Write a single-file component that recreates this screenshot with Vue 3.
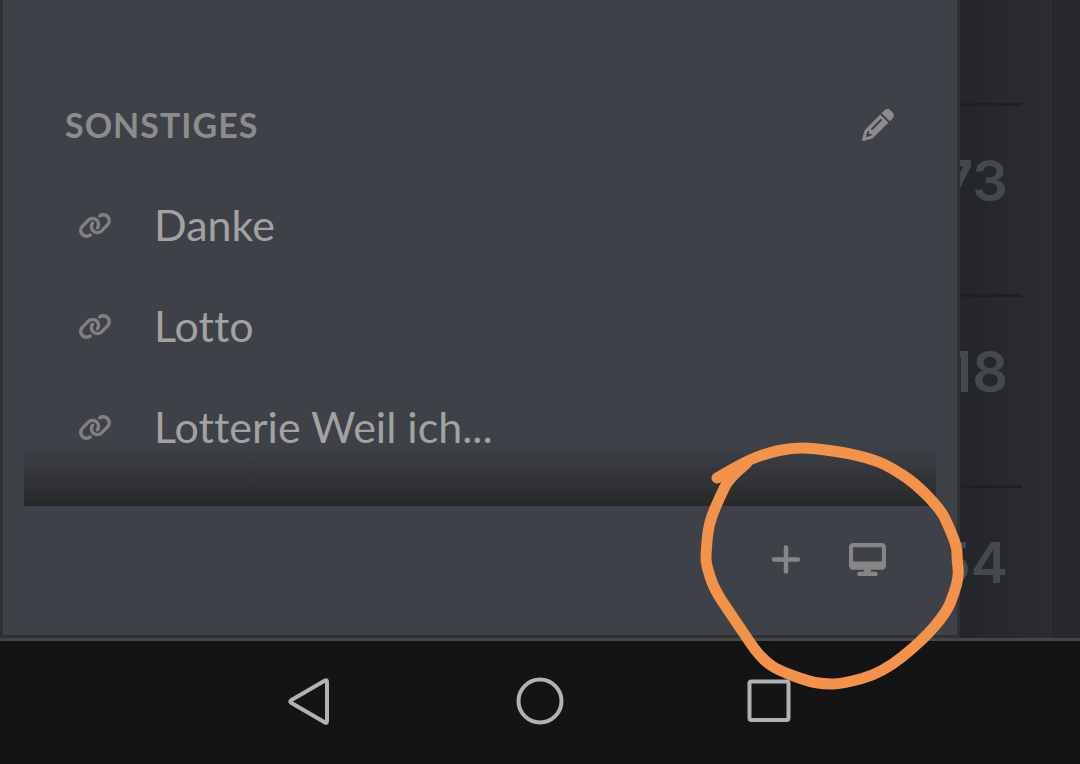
<script setup>
const links = ['Danke', 'Lotto', 'Lotterie Weil ich...']
const counts = ['', '73', '18', '54']

const markerPoints = [
  [717, 478], [742, 463], [767, 453], [791, 448], [813, 448], [853, 454], [877, 461],
  [890, 467], [915, 483], [941, 510], [949, 527], [957, 547], [957, 560], [959, 575],
  [954, 594], [946, 613], [922, 641], [882, 673], [842, 684], [823, 684], [807, 681],
  [778, 670], [766, 662], [755, 650], [745, 635], [730, 613], [714, 589], [706, 564],
  [706, 553], [708, 530], [712, 515], [720, 497], [728, 480], [747, 463],
]

const markerPath = markerPoints.reduce((path, [x, y], i, all) => {
  if (i === 0) return `M${x} ${y}`
  const next = all[i + 1]
  if (!next) return `${path}L${x} ${y}`
  return `${path}Q${x} ${y} ${(x + next[0]) / 2} ${(y + next[1]) / 2}`
}, '')
</script>

<template>
  <div class="screen">
    <div class="view">
      <main class="page">
        <ul class="topics">
          <li v-for="(count, i) in counts" :key="i" class="topic">{{ count }}</li>
        </ul>
      </main>

      <aside class="drawer">
        <div class="sections">
          <header class="section-head">
            <h2>Sonstiges</h2>
            <button type="button" aria-label="Bearbeiten">
              <svg width="32" height="32" viewBox="0 0 512 512" fill="currentColor">
                <path d="M410.3 231l11.3-11.3-33.9-33.9-62.1-62.1L291.7 89.8l-11.3 11.3-22.6 22.6L58.6 322.9c-10.4 10.4-18 23.3-22.2 37.4L1 480.7c-2.5 8.4-.2 17.5 6.1 23.7s15.3 8.5 23.7 6.1l120.3-35.4c14.1-4.2 27-11.8 37.4-22.2L387.7 253.7 410.3 231zM160 399.4l-9.1 22.7c-4 3.1-8.5 5.4-13.3 6.9L59.4 452l23-78.1c1.4-4.9 3.8-9.4 6.9-13.3l22.7-9.1v32c0 8.8 7.2 16 16 16h32zM362.7 18.7L348.3 33.2 325.7 55.8 314.3 67.1l33.9 33.9 62.1 62.1 33.9 33.9 11.3-11.3 22.6-22.6 14.5-14.5c25-25 25-65.5 0-90.5L453.3 18.7c-25-25-65.5-25-90.5 0zm-47.4 168l-144 144c-6.2 6.2-16.4 6.2-22.6 0s-6.2-16.4 0-22.6l144-144c6.2-6.2 16.4-6.2 22.6 0s6.2 16.4 0 22.6z" />
              </svg>
            </button>
          </header>
          <nav class="links">
            <a v-for="link in links" :key="link" href="#">
              <svg width="34" height="27" viewBox="0 0 640 512" fill="currentColor" aria-hidden="true">
                <path d="M579.8 267.7c56.5-56.5 56.5-148 0-204.5c-50-50-128.8-56.5-186.3-15.4l-1.6 1.1c-14.4 10.3-17.7 30.3-7.4 44.6s30.3 17.7 44.6 7.4l1.6-1.1c32.1-22.9 76-19.3 103.8 8.6c31.5 31.5 31.5 82.5 0 114L422.3 334.8c-31.5 31.5-82.5 31.5-114 0c-27.9-27.9-31.5-71.8-8.6-103.8l1.1-1.6c10.3-14.4 6.9-34.4-7.4-44.6s-34.4-6.9-44.6 7.4l-1.1 1.6C206.5 251.2 213 330 263 380c56.5 56.5 148 56.5 204.5 0L579.8 267.7zM60.2 244.3c-56.5 56.5-56.5 148 0 204.5c50 50 128.8 56.5 186.3 15.4l1.6-1.1c14.4-10.3 17.7-30.3 7.4-44.6s-30.3-17.7-44.6-7.4l-1.6 1.1c-32.1 22.9-76 19.3-103.8-8.6C74 372 74 321 105.5 289.5L217.7 177.2c31.5-31.5 82.5-31.5 114 0c27.9 27.9 31.5 71.8 8.6 103.9l-1.1 1.6c-10.3 14.4-6.9 34.4 7.4 44.6s34.4 6.9 44.6-7.4l1.1-1.6C433.5 260.8 427 182 377 132c-56.5-56.5-148-56.5-204.5 0L60.2 244.3z" />
              </svg>
              <span>{{ link }}</span>
            </a>
          </nav>
          <div class="fade"></div>
        </div>
        <footer class="tools">
          <button type="button" aria-label="Abschnitt hinzufügen">
            <svg width="30" height="30" viewBox="0 0 30 30" fill="none" stroke="currentColor" stroke-width="4.500" stroke-linecap="round">
              <path d="M15 2.500V26.500M3 14.500H27" />
            </svg>
          </button>
          <button type="button" aria-label="Desktop-Ansicht">
            <svg width="37" height="33" viewBox="0 0 576 512" fill="currentColor">
              <path d="M64 0C28.7 0 0 28.7 0 64V352c0 35.3 28.7 64 64 64H240l-10.7 32H160c-17.7 0-32 14.3-32 32s14.3 32 32 32H416c17.7 0 32-14.3 32-32s-14.3-32-32-32H346.7L336 416H512c35.3 0 64-28.7 64-64V64c0-35.3-28.7-64-64-64H64zM512 64V288H64V64H512z" />
            </svg>
          </button>
        </footer>
      </aside>
    </div>

    <nav class="system-bar">
      <button type="button" aria-label="Zurück">
        <svg width="50" height="50" viewBox="0 0 50 50">
          <path d="M40 4.500Q42 3.500 42 6V45Q42 47.500 40 46.500L6.500 27Q4 25.500 6.500 24Z" />
        </svg>
      </button>
      <button type="button" aria-label="Startseite">
        <svg width="50" height="50" viewBox="0 0 50 50"><circle cx="25" cy="25" r="21.500" /></svg>
      </button>
      <button type="button" aria-label="Übersicht">
        <svg width="50" height="50" viewBox="0 0 50 50"><rect x="4.500" y="5.500" width="39" height="38.500" rx="2" /></svg>
      </button>
    </nav>

    <svg class="marker" width="290" height="270" viewBox="690 430 290 270" aria-hidden="true">
      <path :d="markerPath" />
    </svg>
  </div>
</template>

<style>
body {
  margin: 0;
  background: #141414;
}
</style>

<style scoped>
.screen {
  position: relative;
  display: flex;
  flex-direction: column;
  min-height: 100vh;
  overflow: hidden;
  font-family: Lato, "Noto Sans", sans-serif;
  font-variant-ligatures: none;
}

button {
  display: flex;
  padding: 0;
  border: 0;
  background: none;
  color: inherit;
}

.view {
  flex: 1;
  display: grid;
  grid-template-columns: minmax(0, 1fr) 120px;
  background: #27282b;
  border-bottom: 3px solid #444545;
}

.page {
  grid-area: 1 / 1 / 2 / 3;
  margin-right: 28px;
  padding-right: 29px;
  background: linear-gradient(to left, #2c2d31, #242528 92px);
  border-right: 1px solid #303133;
}

.topics {
  margin: 0;
  padding: 0;
  list-style: none;
}

.topic {
  box-sizing: border-box;
  height: 191px;
  padding: 39px 14px 0 0;
  border-bottom: 3px solid #1f2021;
  color: #444950;
  font-family: Inter, Lato, sans-serif;
  font-size: 56px;
  font-weight: 600;
  line-height: 72px;
  text-align: right;
}

.topic:first-child {
  height: 106px;
}

.topic:last-child {
  height: 150px;
  border-bottom: 0;
}

.drawer {
  grid-area: 1 / 1 / 2 / 2;
  z-index: 1;
  display: flex;
  flex-direction: column;
  border: 3px solid #303132;
  border-top: 0;
  background: #3e4148;
}

.sections {
  position: relative;
  flex: 1;
  padding: 85px 63px 27px 62px;
  color: #8c8c8c;
}

.section-head {
  display: flex;
  align-items: center;
  justify-content: space-between;
  height: 80px;
  margin-bottom: 10px;
}

h2 {
  margin: 0;
  font-size: 34px;
  font-weight: 700;
  line-height: 40px;
  letter-spacing: 1px;
  text-transform: uppercase;
}

.links a {
  display: flex;
  align-items: center;
  gap: 42px;
  height: 101px;
  padding-left: 13px;
  color: #808080;
  text-decoration: none;
}

.links span {
  padding-bottom: 2px;
  color: #a2a2a2;
  font-size: 43px;
  line-height: 52px;
}

.fade {
  position: absolute;
  right: 21px;
  bottom: 0;
  left: 21px;
  height: 60px;
  background: linear-gradient(rgba(39, 40, 40, 0), #272828);
}

.tools {
  display: flex;
  align-items: center;
  justify-content: flex-end;
  gap: 48px;
  height: 107px;
  padding: 0 71px 22px 0;
  color: #868686;
}

.system-bar {
  display: flex;
  align-items: center;
  justify-content: center;
  gap: 180px;
  height: 120px;
  padding-bottom: 3px;
  background: #141414;
}

.system-bar svg {
  fill: none;
  stroke: #b2b2b2;
  stroke-width: 4;
}

.marker {
  position: absolute;
  right: 100px;
  bottom: 64px;
  z-index: 2;
  pointer-events: none;
}

.marker path {
  fill: none;
  stroke: #f3924a;
  stroke-width: 11;
  stroke-linecap: round;
  stroke-linejoin: round;
}
</style>
